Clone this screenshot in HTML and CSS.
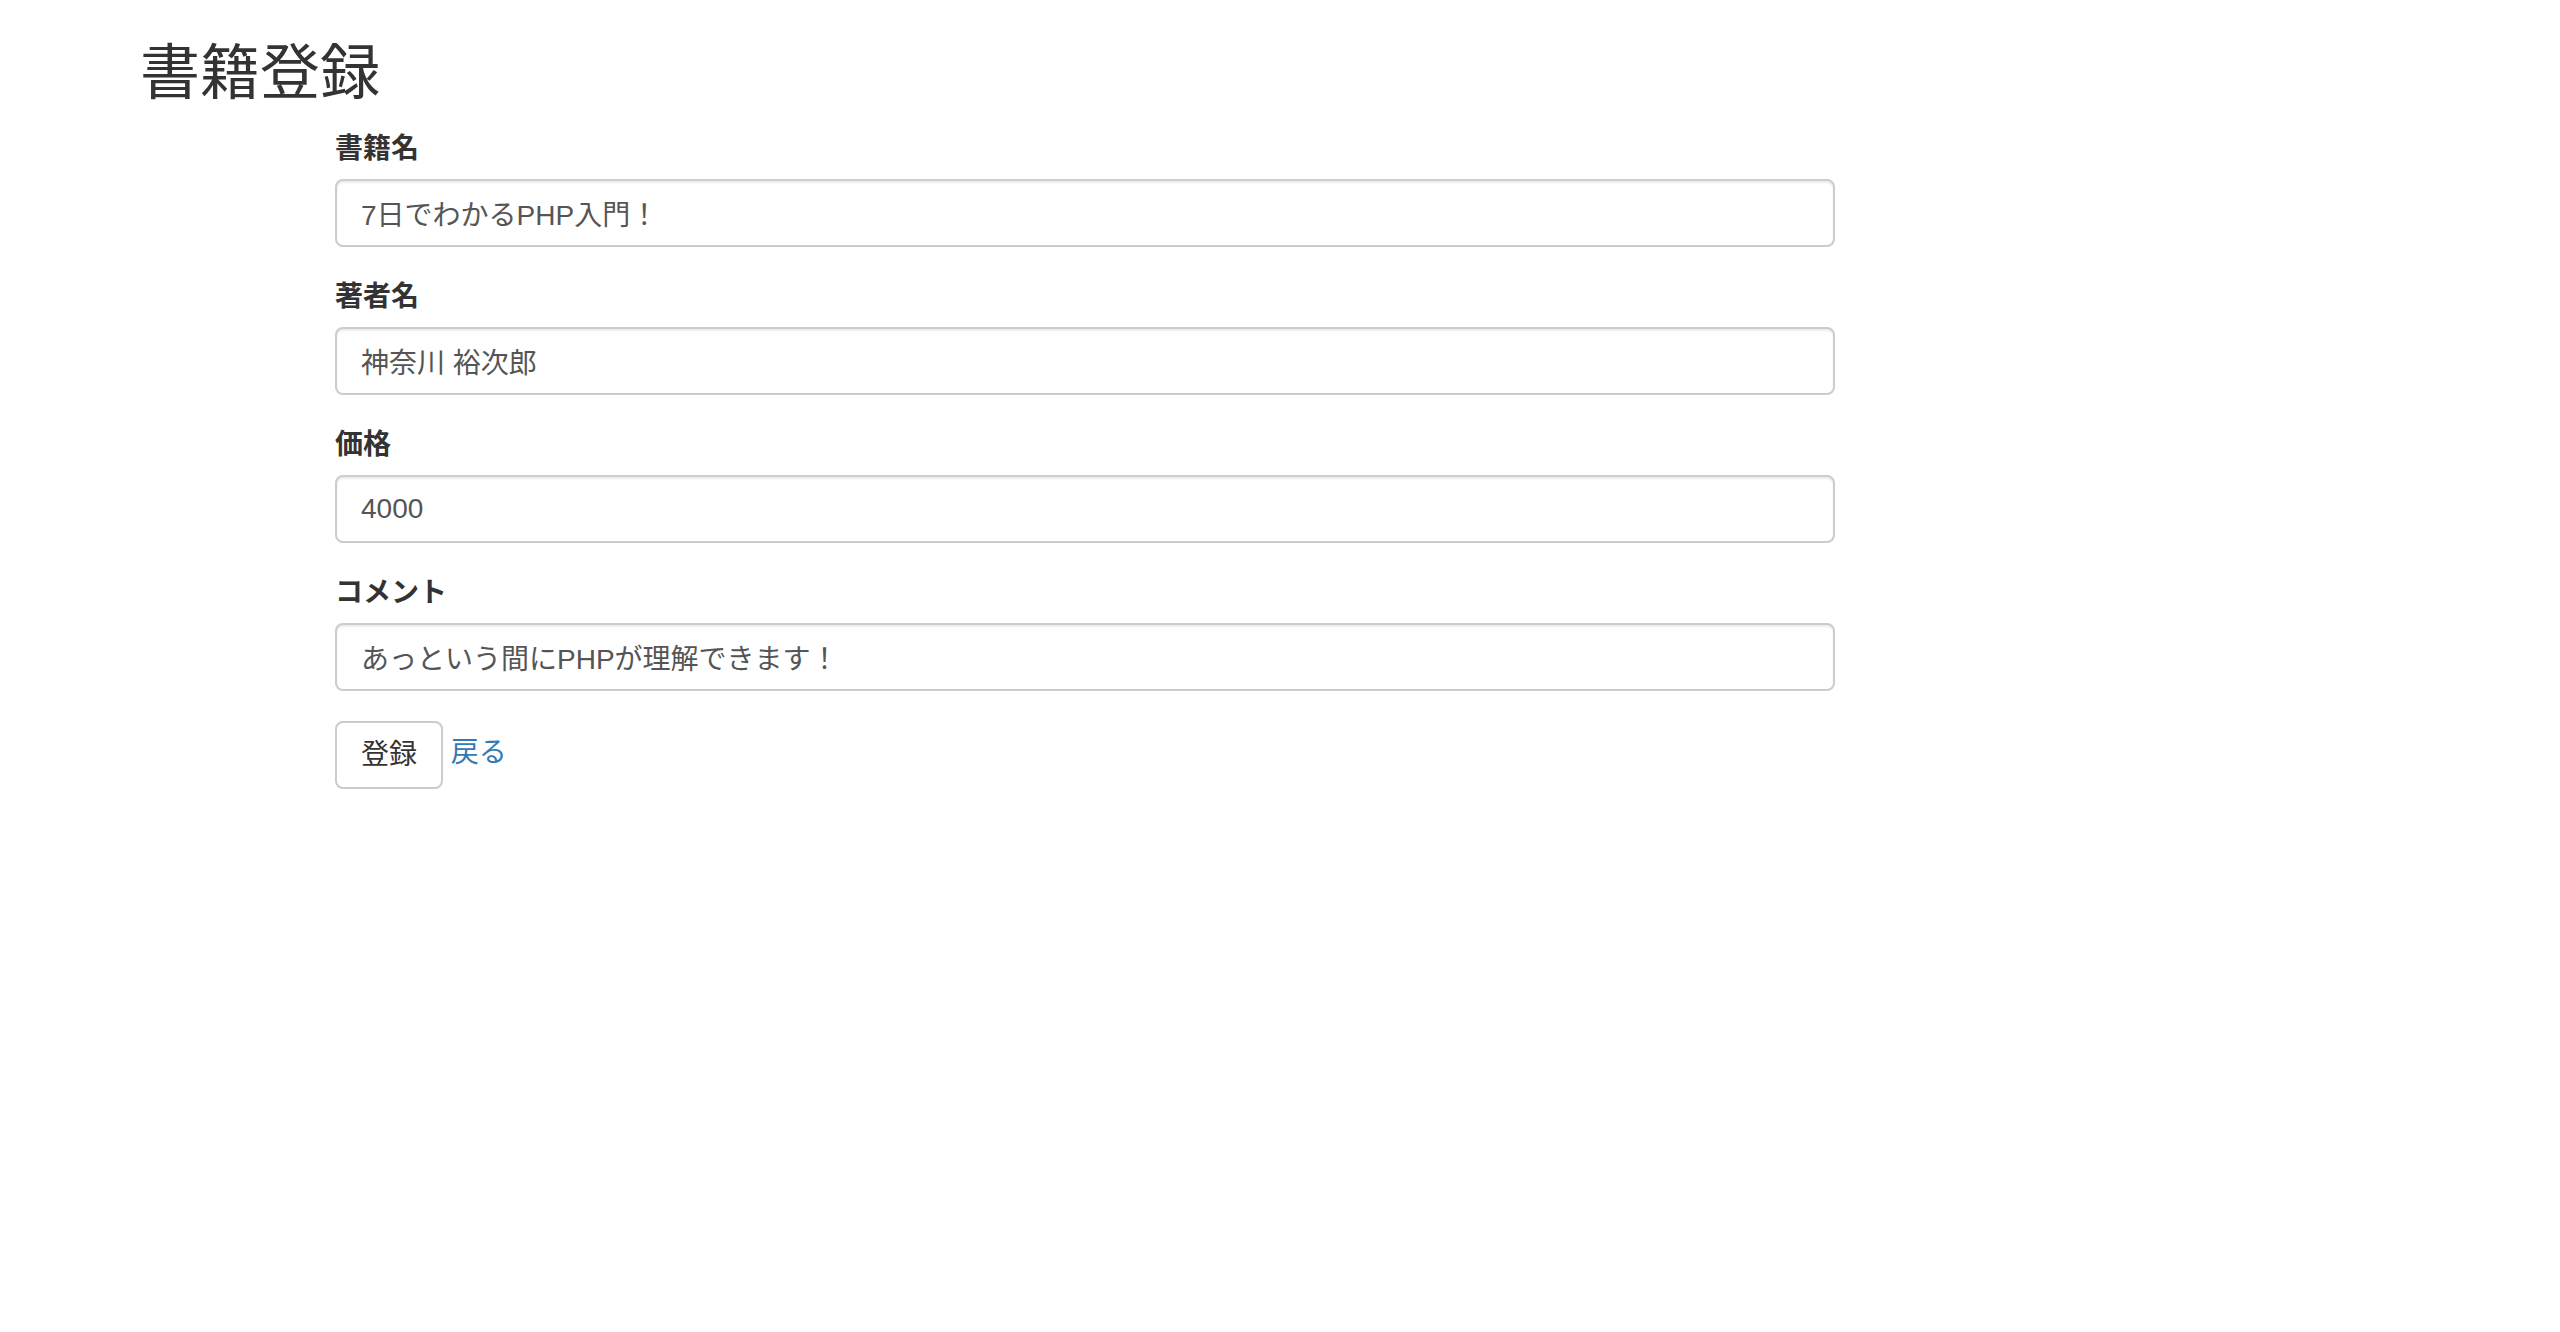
FILE: index.html
```html
<!DOCTYPE html>
<html lang="ja">
<head>
<meta charset="utf-8">
<title>書籍登録</title>
<link rel="stylesheet" href="styles.css">
</head>
<body>
<div class="container">
  <h2 class="title">書籍登録</h2>
  <form class="book-form">
    <div class="form-group">
      <label class="label" for="title">書籍名</label>
      <input class="form-control" id="title" type="text" value="7日でわかるPHP入門！">
    </div>
    <div class="form-group">
      <label class="label" for="author">著者名</label>
      <input class="form-control" id="author" type="text" value="神奈川 裕次郎">
    </div>
    <div class="form-group">
      <label class="label" for="price">価格</label>
      <input class="form-control" id="price" type="text" value="4000">
    </div>
    <div class="form-group">
      <label class="label" for="comment">コメント</label>
      <input class="form-control" id="comment" type="text" value="あっという間にPHPが理解できます！">
    </div>
    <div class="actions">
      <button class="btn" type="button">登録</button> <a class="back-link" href="#">戻る</a>
    </div>
  </form>
</div>
</body>
</html>
```

FILE: styles.css
```css
* {
  box-sizing: border-box;
}

html, body {
  margin: 0;
  padding: 0;
  background: #fff;
}

body {
  font-family: "Liberation Sans", "Noto Sans CJK JP", sans-serif;
  font-size: 28px;
  line-height: 40px;
  color: #333;
}

.container {
  width: 2340px;
  margin: 0 auto;
  padding: 0 30px;
}

.title {
  font-size: 60px;
  font-weight: 400;
  line-height: 66px;
  margin: 41px 0 22px;
  color: #333;
}

.book-form {
  margin-left: 195px;
  width: 1500px;
}

.form-group {
  margin-bottom: 30px;
}

.label {
  display: inline-block;
  font-weight: 700;
  margin-bottom: 10px;
  line-height: 40px;
}

.form-control {
  display: block;
  width: 100%;
  height: 68px;
  padding: 0 24px 0 24px;
  font-family: "Liberation Sans", "Noto Sans CJK JP", sans-serif;
  font-size: 28px;
  color: #555;
  background: #fff;
  border: 2px solid #ccc;
  border-radius: 8px;
  box-shadow: inset 0 2px 2px rgba(0, 0, 0, 0.075);
  outline: none;
}

.actions {
  line-height: 40px;
}

.btn {
  display: inline-block;
  height: 68px;
  padding: 0 24px;
  font-family: "Liberation Sans", "Noto Sans CJK JP", sans-serif;
  font-size: 28px;
  line-height: 40px;
  color: #333;
  background: #fff;
  border: 2px solid #ccc;
  border-radius: 8px;
  vertical-align: middle;
}

.back-link {
  color: #337ab7;
  text-decoration: none;
}
```
